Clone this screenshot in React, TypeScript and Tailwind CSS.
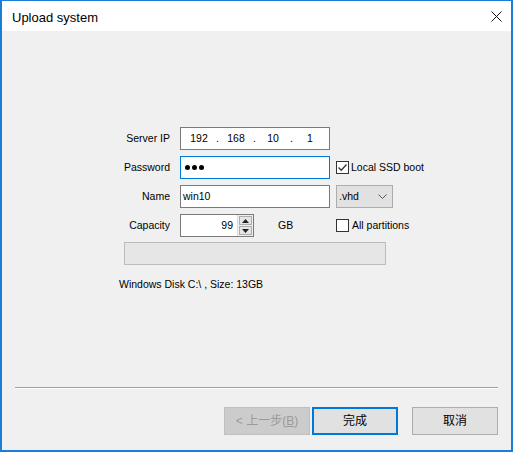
import React from "react";

const font = { fontFamily: '"Liberation Sans", "Noto Sans CJK SC", sans-serif' };

function Check({ checked }: { checked?: boolean }) {
  return (
    <div className="w-[13px] h-[13px] border border-[#333333] bg-white flex items-center justify-center">
      {checked && (
        <svg width="11" height="11" viewBox="0 0 11 11">
          <path d="M1.5 5.5 L4.2 8.2 L9.5 2.5" fill="none" stroke="#333" strokeWidth="1.3" />
        </svg>
      )}
    </div>
  );
}

export default function App() {
  return (
    <div
      className="w-[513px] h-[452px] border-x-2 border-b-2 border-t border-[#1a7fd4] bg-[#f0f0f0] flex flex-col text-[10.5px] text-black"
      style={font}
    >
      {/* title bar */}
      <div className="h-[30px] bg-white flex items-center justify-between pl-[10px] pr-[9px] shrink-0">
        <span className="text-[13px] leading-none mt-[2px]">Upload system</span>
        <svg width="11" height="11" viewBox="0 0 11 11" className="mt-[1px]">
          <path d="M0.5 0.5 L10.5 10.5 M10.5 0.5 L0.5 10.5" stroke="#111" strokeWidth="1" />
        </svg>
      </div>

      {/* body */}
      <div className="flex-1 flex flex-col">
        <div className="pt-[96px] flex flex-col gap-[6px]">
          {/* Server IP */}
          <div className="flex items-center h-[23px]">
            <div className="ml-[108px] w-[60px] text-right">Server IP</div>
            <div className="ml-[10px] w-[150px] h-[23px] border border-[#7a7a7a] bg-white flex items-center pl-[3px]">
              <span className="w-[30px] text-center">192</span>
              <span className="w-[7px] text-center">.</span>
              <span className="w-[30px] text-center">168</span>
              <span className="w-[7px] text-center">.</span>
              <span className="w-[30px] text-center">10</span>
              <span className="w-[7px] text-center">.</span>
              <span className="w-[30px] text-center">1</span>
            </div>
          </div>
          {/* Password */}
          <div className="flex items-center h-[23px]">
            <div className="ml-[108px] w-[60px] text-right">Password</div>
            <div className="ml-[10px] w-[150px] h-[23px] border border-[#0078d7] bg-white flex items-center pl-[4px] gap-[1px]">
              <span className="w-[5px] h-[5px] rounded-full bg-black"></span>
              <span className="w-[5px] h-[5px] rounded-full bg-black ml-[1px]"></span>
              <span className="w-[5px] h-[5px] rounded-full bg-black ml-[1px]"></span>
            </div>
            <div className="ml-[6px] flex items-center gap-[2px]">
              <Check checked />
              <span>Local SSD boot</span>
            </div>
          </div>
          {/* Name */}
          <div className="flex items-center h-[23px]">
            <div className="ml-[108px] w-[60px] text-right">Name</div>
            <div className="ml-[10px] w-[150px] h-[23px] border border-[#7a7a7a] bg-white flex items-center pl-[2px]">
              win10
            </div>
            <div className="ml-[6px] w-[57px] h-[23px] border border-[#adadad] bg-[#e1e1e1] flex items-center justify-between pl-[2px] pr-[5px]">
              <span>.vhd</span>
              <svg width="9" height="5" viewBox="0 0 9 5">
                <path d="M0.5 0.5 L4.5 4.5 L8.5 0.5" fill="none" stroke="#555" strokeWidth="1" />
              </svg>
            </div>
          </div>
          {/* Capacity */}
          <div className="flex items-center h-[23px]">
            <div className="ml-[108px] w-[60px] text-right">Capacity</div>
            <div className="ml-[10px] w-[74px] h-[23px] border border-[#7a7a7a] bg-white flex">
              <div className="flex-1 flex items-center justify-end pr-[4px]">99</div>
              <div className="w-[16px] flex flex-col gap-[1px] p-[1px] bg-[#f0f0f0] border-l border-[#dadada]">
                <div className="flex-1 border border-[#adadad] bg-[#e5e5e5] flex items-center justify-center">
                  <svg width="7" height="4" viewBox="0 0 7 4"><path d="M0 4 L3.5 0 L7 4 Z" fill="#222" /></svg>
                </div>
                <div className="flex-1 border border-[#adadad] bg-[#e5e5e5] flex items-center justify-center">
                  <svg width="7" height="4" viewBox="0 0 7 4"><path d="M0 0 L3.5 4 L7 0 Z" fill="#222" /></svg>
                </div>
              </div>
            </div>
            <div className="ml-[24px] w-[58px]">GB</div>
            <div className="flex items-center gap-[3px]">
              <Check />
              <span>All partitions</span>
            </div>
          </div>
        </div>
        {/* progress bar */}
        <div className="mt-[5px] ml-[122px] w-[262px] h-[23px] border border-[#bcbcbc] bg-[#e6e6e6]"></div>
        <div className="mt-[13px] ml-[117px] leading-[13px]">Windows Disk C:\ , Size: 13GB</div>

        {/* footer */}
        <div className="mt-auto">
          <div className="ml-[13px] w-[483px] h-[2px] border-t border-[#a0a0a0] border-b border-b-white"></div>
          <div className="mt-[18px] mb-[15px] h-[28px] flex justify-end pr-[13px] text-[12px]">
            <div className="w-[86px] h-[28px] border border-[#bfbfbf] bg-[#cccccc] text-[#9a9a9a] flex items-center justify-center">
              &lt; 上一步(<span className="underline">B</span>)
            </div>
            <div className="ml-[2px] w-[86px] h-[28px] border-2 border-[#0078d7] bg-[#e1e1e1] flex items-center justify-center">
              完成
            </div>
            <div className="ml-[14px] w-[86px] h-[28px] border border-[#adadad] bg-[#e1e1e1] flex items-center justify-center">
              取消
            </div>
          </div>
        </div>
      </div>
    </div>
  );
}
